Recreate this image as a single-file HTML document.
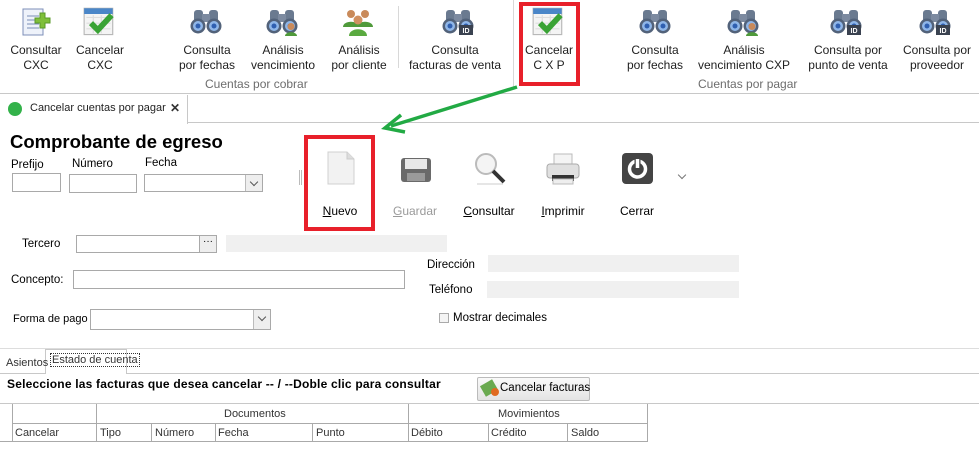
<!DOCTYPE html>
<html><head><meta charset="utf-8"><style>
*{margin:0;padding:0;box-sizing:border-box}
body{width:979px;height:460px;background:#fff;position:relative;overflow:hidden;font-family:"Liberation Sans",sans-serif;font-size:12px;color:#000}
.a{position:absolute}
.rl{position:absolute;text-align:center;font-size:12px;line-height:15px;color:#1e1e1e;white-space:nowrap}
.gl{position:absolute;font-size:12px;color:#6d6d6d;white-space:nowrap}
.in{position:absolute;border:1px solid #a9a9a9;background:#fff}
.gr{position:absolute;background:#f0f0f0}
.cb{position:absolute;border:1px solid #a9a9a9;background:#fff}
.cb i{position:absolute;right:0;top:0;bottom:0;width:17px;background:#eee;border-left:1px solid #bbb}
.cb i:after{content:"";position:absolute;left:5px;top:4px;width:5px;height:5px;border-right:1.5px solid #555;border-bottom:1.5px solid #555;transform:rotate(45deg)}
.lb{position:absolute;font-size:11.5px;white-space:nowrap}
.tb{position:absolute;font-size:12px;text-align:center;white-space:nowrap}
.th{position:absolute;font-size:11px;color:#333;white-space:nowrap}
</style></head><body>
<svg width="0" height="0" style="position:absolute">
<defs>
<symbol id="bino" viewBox="0 0 32 28">
<rect x="4" y="2" width="9" height="12" rx="3" fill="#6a7a90"/><rect x="19" y="2" width="9" height="12" rx="3" fill="#6a7a90"/>
<rect x="12" y="6" width="8" height="8" fill="#7c8aa0"/>
<circle cx="8" cy="18" r="7.5" fill="#52627a"/><circle cx="24" cy="18" r="7.5" fill="#52627a"/>
<circle cx="8" cy="18" r="5" fill="#8fb6e8"/><circle cx="24" cy="18" r="5" fill="#8fb6e8"/>
<circle cx="8" cy="18" r="2.5" fill="#2f5fb0"/><circle cx="24" cy="18" r="2.5" fill="#2f5fb0"/>
</symbol>
<symbol id="id" viewBox="0 0 14 10"><rect width="14" height="10" fill="#3a4250"/><text x="7" y="8" font-size="7" font-weight="bold" fill="#fff" text-anchor="middle" font-family="Liberation Sans">ID</text></symbol>
<symbol id="per" viewBox="0 0 14 14"><circle cx="7" cy="4.5" r="3.5" fill="#c98a5a"/><path d="M1 14c0-5 12-5 12 0z" fill="#4f9a3a"/></symbol>
<symbol id="cal" viewBox="0 0 28 28"><rect x="1" y="2" width="25" height="23" fill="#f4f4f4" stroke="#b8b8b8"/><rect x="1" y="2" width="25" height="5" fill="#4a86c8"/><path d="M3 10h21M3 15h21M3 20h21M9 8v16M16 8v16" stroke="#ddd"/><path d="M7 15l6 6 12-13" stroke="#3aa335" stroke-width="5" fill="none"/></symbol>
</defs></svg>

<!-- Ribbon -->
<svg class="a" style="left:21px;top:7px" width="30" height="30" viewBox="0 0 30 30"><rect x="2" y="2" width="20" height="26" fill="#eef2fa" stroke="#7d8fb8"/><path d="M6 9h12M6 13h12M6 17h12M6 21h12" stroke="#7a8fb5"/><path d="M19 6h5v5h5v5h-5v5h-5v-5h-5v-5h5z" fill="#7fbf3a" stroke="#5a9a28"/></svg>
<svg class="a" style="left:83px;top:6px" width="32" height="32"><use href="#cal"/></svg>
<svg class="a" style="left:190px;top:8px" width="32" height="28"><use href="#bino"/></svg>
<svg class="a" style="left:266px;top:8px" width="32" height="28"><use href="#bino"/></svg>
<svg class="a" style="left:284px;top:22px" width="14" height="14"><use href="#per"/></svg>
<svg class="a" style="left:342px;top:7px" width="32" height="30" viewBox="0 0 32 30"><circle cx="9" cy="7" r="4" fill="#c98a5a"/><circle cx="23" cy="7" r="4" fill="#c98a5a"/><path d="M1 20c0-7 16-7 16 0zM15 20c0-7 16-7 16 0z" fill="#4f9a3a"/><circle cx="16" cy="13" r="4.5" fill="#d09060"/><path d="M7 29c0-9 18-9 18 0z" fill="#5aaa40"/></svg>
<div class="a" style="left:398px;top:6px;width:1px;height:62px;background:#d8d8d8"></div>
<svg class="a" style="left:442px;top:8px" width="32" height="28"><use href="#bino"/></svg>
<svg class="a" style="left:459px;top:25px" width="14" height="10"><use href="#id"/></svg>
<div class="a" style="left:513px;top:0;width:1px;height:88px;background:#d8d8d8"></div>
<svg class="a" style="left:532px;top:6px" width="32" height="32"><use href="#cal"/></svg>
<svg class="a" style="left:639px;top:8px" width="32" height="28"><use href="#bino"/></svg>
<svg class="a" style="left:727px;top:8px" width="32" height="28"><use href="#bino"/></svg>
<svg class="a" style="left:745px;top:22px" width="14" height="14"><use href="#per"/></svg>
<svg class="a" style="left:830px;top:8px" width="32" height="28"><use href="#bino"/></svg>
<svg class="a" style="left:847px;top:25px" width="14" height="10"><use href="#id"/></svg>
<svg class="a" style="left:919px;top:8px" width="32" height="28"><use href="#bino"/></svg>
<svg class="a" style="left:936px;top:25px" width="14" height="10"><use href="#id"/></svg>

<div class="rl" style="left:5px;top:43px;width:62px">Consultar<br>CXC</div>
<div class="rl" style="left:70px;top:43px;width:60px">Cancelar<br>CXC</div>
<div class="rl" style="left:176px;top:43px;width:62px">Consulta<br>por fechas</div>
<div class="rl" style="left:245px;top:43px;width:76px">Análisis<br>vencimiento</div>
<div class="rl" style="left:328px;top:43px;width:62px">Análisis<br>por cliente</div>
<div class="rl" style="left:405px;top:43px;width:100px">Consulta<br>facturas de venta</div>
<div class="rl" style="left:519px;top:43px;width:60px">Cancelar<br>C X P</div>
<div class="rl" style="left:622px;top:43px;width:66px">Consulta<br>por fechas</div>
<div class="rl" style="left:694px;top:43px;width:100px">Análisis<br>vencimiento CXP</div>
<div class="rl" style="left:805px;top:43px;width:86px">Consulta por<br>punto de venta</div>
<div class="rl" style="left:897px;top:43px;width:80px">Consulta por<br>proveedor</div>
<div class="gl" style="left:205px;top:77px">Cuentas por cobrar</div>
<div class="gl" style="left:698px;top:77px">Cuentas por pagar</div>
<div class="a" style="left:519px;top:2px;width:61px;height:84px;border:4px solid #e8202a"></div>
<div class="a" style="left:0;top:93px;width:979px;height:1px;background:#c8c8c8"></div>

<!-- Tab strip -->
<div class="a" style="left:0;top:95px;width:188px;height:29px;border-right:1px solid #c8c8c8;background:#fff"></div>
<div class="a" style="left:8px;top:102px;width:14px;height:14px;border-radius:50%;background:#33b24a"></div>
<div class="a" style="left:30px;top:102px;font-size:11px;color:#222">Cancelar cuentas por pagar</div>
<div class="a" style="left:170px;top:101px;font-size:12px;font-weight:bold;color:#333">✕</div>
<div class="a" style="left:188px;top:122px;width:791px;height:1px;background:#c8c8c8"></div>

<!-- green arrow -->
<svg class="a" style="left:375px;top:80px" width="150" height="60"><path d="M142 7 L16 46" stroke="#22aa44" stroke-width="3.5" fill="none"/><path d="M26 35 L10 48 L30 52" stroke="#22aa44" stroke-width="3.5" fill="none"/></svg>

<!-- Form -->
<div class="a" style="left:10px;top:131px;font-size:18.5px;font-weight:bold">Comprobante de egreso</div>
<div class="lb" style="left:11px;top:159px">Prefijo</div>
<div class="lb" style="left:72px;top:158px">Número</div>
<div class="lb" style="left:145px;top:157px">Fecha</div>
<div class="in" style="left:12px;top:173px;width:49px;height:19px"></div>
<div class="in" style="left:69px;top:174px;width:68px;height:19px"></div>
<div class="cb" style="left:144px;top:174px;width:119px;height:18px"><i></i></div>
<div class="a" style="left:299px;top:170px;width:3px;height:15px;border-left:1px solid #bbb;border-right:1px solid #bbb"></div>

<!-- toolbar -->
<svg class="a" style="left:327px;top:151px" width="28" height="34" viewBox="0 0 28 34"><path d="M1 1h19l7 7v25H1z" fill="#f2f2f2" stroke="#d0d0d0"/><path d="M20 1v7h7" fill="#ddd" stroke="#ccc"/></svg>
<svg class="a" style="left:400px;top:157px" width="32" height="26" viewBox="0 0 32 26"><rect x="1" y="1" width="30" height="24" rx="3" fill="#6a6a6a"/><rect x="5" y="2" width="22" height="10" fill="#e8e8e8"/><rect x="7" y="16" width="18" height="8" fill="#9a9a9a"/></svg>
<svg class="a" style="left:473px;top:152px" width="34" height="34" viewBox="0 0 34 34"><circle cx="13" cy="12" r="10" fill="#f4f4f4" stroke="#bbb" stroke-width="2"/><path d="M20 19l11 11" stroke="#333" stroke-width="4"/><path d="M4 32h26" stroke="#ccc"/></svg>
<svg class="a" style="left:546px;top:153px" width="34" height="32" viewBox="0 0 34 32"><rect x="8" y="1" width="18" height="12" fill="#f4f4f4" stroke="#bbb"/><rect x="1" y="11" width="32" height="14" rx="3" fill="#e0e0e0" stroke="#aaa"/><rect x="6" y="22" width="22" height="6" fill="#333"/><rect x="7" y="26" width="20" height="5" fill="#eee" stroke="#bbb"/></svg>
<svg class="a" style="left:622px;top:153px" width="31" height="31" viewBox="0 0 31 31"><rect width="31" height="31" rx="4" fill="#444"/><circle cx="15.5" cy="16" r="8" fill="none" stroke="#fff" stroke-width="3.5"/><path d="M15.5 5v10" stroke="#444" stroke-width="6"/><path d="M15.5 6v9" stroke="#fff" stroke-width="3.5"/></svg>
<div class="a" style="left:679px;top:172px;width:6px;height:6px;border-right:1.5px solid #777;border-bottom:1.5px solid #777;transform:rotate(45deg)"></div>
<div class="tb" style="left:310px;top:204px;width:60px"><u>N</u>uevo</div>
<div class="tb" style="left:385px;top:204px;width:60px;color:#9a9a9a"><u>G</u>uardar</div>
<div class="tb" style="left:454px;top:204px;width:70px"><u>C</u>onsultar</div>
<div class="tb" style="left:528px;top:204px;width:70px"><u>I</u>mprimir</div>
<div class="tb" style="left:607px;top:204px;width:60px">Cerrar</div>
<div class="a" style="left:304px;top:135px;width:71px;height:96px;border:4px solid #e8202a"></div>

<div class="lb" style="left:22px;top:238px">Tercero</div>
<div class="in" style="left:76px;top:235px;width:124px;height:18px"></div>
<div class="a" style="left:199px;top:235px;width:18px;height:18px;background:#eee;border:1px solid #a9a9a9;font-size:10px;text-align:center;line-height:12px">···</div>
<div class="gr" style="left:226px;top:235px;width:221px;height:17px"></div>
<div class="lb" style="left:11px;top:274px">Concepto:</div>
<div class="in" style="left:73px;top:270px;width:332px;height:19px"></div>
<div class="lb" style="left:427px;top:259px">Dirección</div>
<div class="gr" style="left:488px;top:255px;width:251px;height:17px"></div>
<div class="lb" style="left:429px;top:284px">Teléfono</div>
<div class="gr" style="left:487px;top:281px;width:252px;height:17px"></div>
<div class="lb" style="left:13px;top:313px;font-size:11px">Forma de pago</div>
<div class="cb" style="left:90px;top:309px;width:181px;height:21px"><i></i></div>
<div class="a" style="left:439px;top:313px;width:10px;height:10px;border:1px solid #aaa;background:#f4f4f4"></div>
<div class="lb" style="left:453px;top:312px">Mostrar decimales</div>

<!-- bottom tabs -->
<div class="a" style="left:0;top:348px;width:979px;height:1px;background:#ddd"></div>
<div class="a" style="left:0;top:373px;width:979px;height:1px;background:#c8c8c8"></div>
<div class="a" style="left:45px;top:349px;width:82px;height:25px;background:#fff;border:1px solid #c8c8c8;border-bottom:none"></div>
<div class="th" style="left:6px;top:357px;font-size:11px">Asientos</div>
<div class="th" style="left:50px;top:353px;font-size:11px;border:1px dotted #333;padding:0 1px">Estado de cuenta</div>
<div class="a" style="left:7px;top:377px;font-size:12px;font-weight:bold;letter-spacing:0.2px">Seleccione las facturas que desea cancelar -- / --Doble clic para consultar</div>
<div class="a" style="left:477px;top:377px;width:113px;height:24px;border:1px solid #bbb;border-radius:2px;background:linear-gradient(#fafafa,#e4e4e4)"></div>
<div class="a" style="left:482px;top:382px;width:14px;height:12px;background:#6aaa50;transform:rotate(-30deg)"></div>
<div class="a" style="left:491px;top:388px;width:8px;height:8px;border-radius:50%;background:#e06a20"></div>
<div class="a" style="left:500px;top:382px;font-size:11.5px">Cancelar facturas</div>
<div class="a" style="left:0;top:403px;width:979px;height:1px;background:#c8c8c8"></div>

<!-- grid -->
<div class="a" style="left:0;top:404px;width:648px;height:38px;border-right:1px solid #aaa;border-bottom:1px solid #aaa"></div>
<div class="a" style="left:12px;top:404px;width:1px;height:38px;background:#aaa"></div>
<div class="a" style="left:96px;top:404px;width:1px;height:38px;background:#aaa"></div>
<div class="a" style="left:408px;top:404px;width:1px;height:38px;background:#aaa"></div>
<div class="a" style="left:12px;top:423px;width:636px;height:1px;background:#aaa"></div>
<div class="a" style="left:151px;top:423px;width:1px;height:19px;background:#aaa"></div>
<div class="a" style="left:215px;top:423px;width:1px;height:19px;background:#aaa"></div>
<div class="a" style="left:312px;top:423px;width:1px;height:19px;background:#aaa"></div>
<div class="a" style="left:488px;top:423px;width:1px;height:19px;background:#aaa"></div>
<div class="a" style="left:567px;top:423px;width:1px;height:19px;background:#aaa"></div>
<div class="th" style="left:224px;top:408px">Documentos</div>
<div class="th" style="left:498px;top:408px">Movimientos</div>
<div class="th" style="left:15px;top:427px">Cancelar</div>
<div class="th" style="left:100px;top:427px">Tipo</div>
<div class="th" style="left:155px;top:427px">Número</div>
<div class="th" style="left:218px;top:427px">Fecha</div>
<div class="th" style="left:316px;top:427px">Punto</div>
<div class="th" style="left:411px;top:427px">Débito</div>
<div class="th" style="left:491px;top:427px">Crédito</div>
<div class="th" style="left:571px;top:427px">Saldo</div>
</body></html>
